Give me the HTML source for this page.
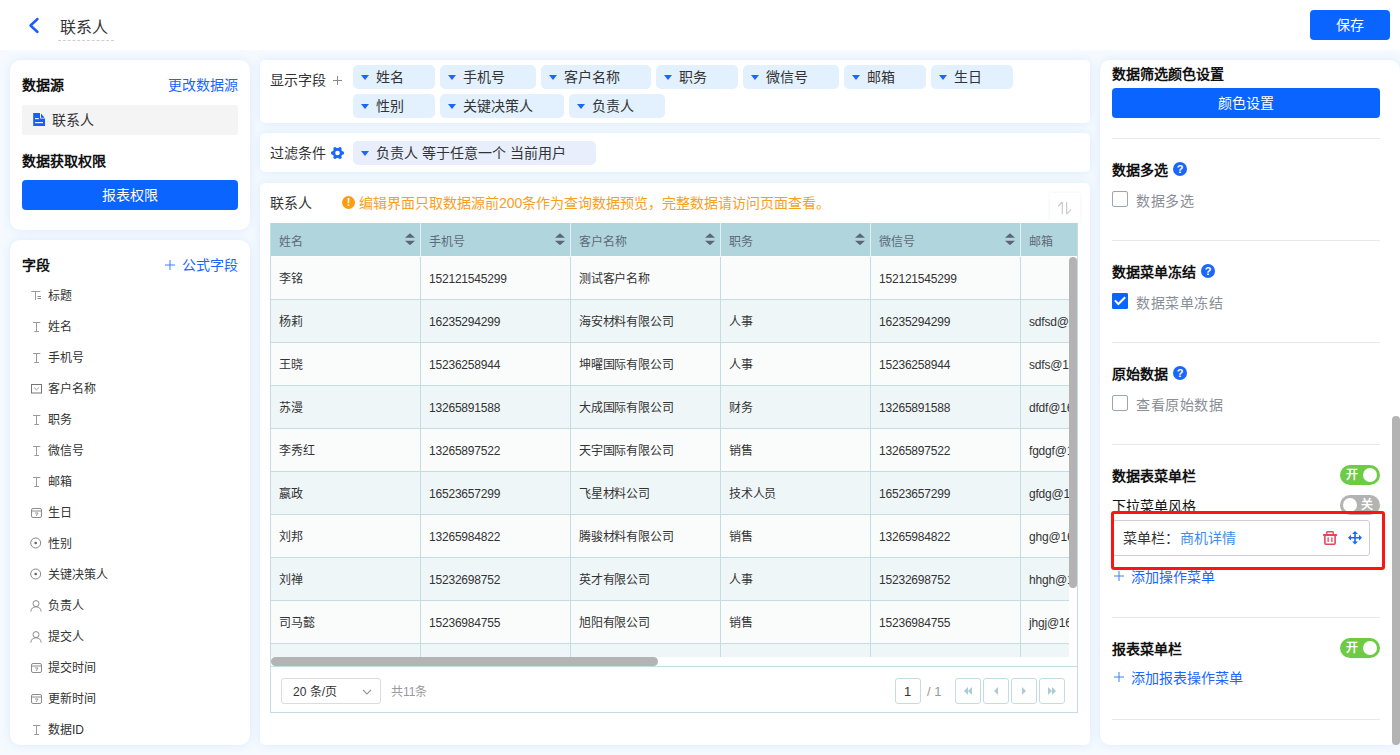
<!DOCTYPE html>
<html lang="zh-CN"><head><meta charset="utf-8">
<style>
*{box-sizing:border-box;margin:0;padding:0}
html,body{width:1400px;height:755px;overflow:hidden}
body{position:relative;background:#f6faff;font-family:"Liberation Sans",sans-serif;color:#333;font-size:14px}
.abs{position:absolute}
.t{position:absolute;white-space:nowrap;line-height:1}
.hdr{left:0;top:0;width:1400px;height:50px;background:#fff}
.panel{position:absolute;background:#fff;border-radius:10px;box-shadow:0 0 10px rgba(212,233,252,.85)}
.b{font-weight:bold;color:#111}
.blue{color:#1a66ff}
.btn{position:absolute;background:#0a64ff;border-radius:4px;color:#fff;text-align:center}
.fi{position:absolute;left:22px;height:20px;font-size:12px;color:#333}
.fi span{position:absolute;left:26px;top:3px;white-space:nowrap;line-height:14px}
.fi svg{position:absolute;left:9px;top:4px}
.tag{position:absolute;height:24px;background:#e3f0fe;border-radius:5px}
.tag i{position:absolute;left:8px;top:10px;width:0;height:0;border-left:4.5px solid transparent;border-right:4.5px solid transparent;border-top:5px solid #1a66ff}
.tag span{position:absolute;left:23px;top:5px;white-space:nowrap;line-height:14px;font-size:14px;color:#333}
.tbl{position:absolute;left:270px;top:223px;width:808px;height:490px;border:1px solid #c4dde3;border-top:none;overflow:hidden}
.row{position:absolute;left:0;width:806px;height:43px;border-bottom:1px solid #c4dde3}
.cell{position:absolute;top:0;height:42px;width:150px;border-right:1px solid #c4dde3;font-size:12px;color:#333}
.cell span{position:absolute;left:8px;top:16px;line-height:13px;white-space:nowrap;letter-spacing:-0.2px}
.sec{position:absolute;left:1112px;width:268px;height:1px;background:#e8e8e8}
.cb{position:absolute;left:1112px;width:16px;height:16px;border:1px solid #9da3b4;border-radius:2px;background:#fff}
.q{position:absolute;width:14px;height:14px;border-radius:50%;background:#1a66ff;color:#fff;font-size:11px;font-weight:bold;text-align:center;line-height:14px}
.tog{position:absolute;left:1340px;width:40px;height:20px;border-radius:10px;background:#6dcb44}
.tog b{position:absolute;top:3px;width:14px;height:14px;border-radius:50%;background:#fff}
.tog span{position:absolute;top:3px;font-size:12px;color:#fff;font-weight:bold;line-height:14px}
.pbtn{position:absolute;top:678px;width:26px;height:26px;border:1px solid #c4dde3;border-radius:3px;background:#fff}
</style></head><body>

<!-- header -->
<div class="abs hdr"></div>
<svg class="abs" style="left:28px;top:17px" width="12" height="17" viewBox="0 0 12 17"><path d="M9.5 2 L2.5 8.5 L9.5 15" fill="none" stroke="#1a5cff" stroke-width="2.4" stroke-linecap="round" stroke-linejoin="round"/></svg>
<div class="t" style="left:60px;top:20px;font-size:16px;color:#333">联系人</div>
<div class="abs" style="left:58px;top:40px;width:56px;height:1px;border-top:1px dashed #cfcfcf"></div>
<div class="btn" style="left:1310px;top:10px;width:80px;height:30px;line-height:30px;font-size:14px">保存</div>

<!-- left panel 1 -->
<div class="panel" style="left:10px;top:60px;width:240px;height:170px"></div>
<div class="t b" style="left:22px;top:78px">数据源</div>
<div class="t blue" style="left:168px;top:78px">更改数据源</div>
<div class="abs" style="left:22px;top:105px;width:216px;height:30px;background:#f4f4f5;border-radius:2px"></div>
<svg class="abs" style="left:33px;top:113px" width="13" height="14" viewBox="0 0 13 14"><path d="M0.2 0 H7 V5.6 H12 V13 H0.2 Z" fill="#1a5cff"/><path d="M8 0.6 L11.6 4.8 H8 Z" fill="#1a5cff"/><rect x="2" y="5.1" width="3.8" height="1.1" fill="#fff"/><rect x="2" y="9.1" width="8" height="1.1" fill="#fff"/></svg>
<div class="t" style="left:52px;top:113px">联系人</div>
<div class="t b" style="left:22px;top:154px">数据获取权限</div>
<div class="btn" style="left:22px;top:180px;width:216px;height:30px;line-height:30px">报表权限</div>

<!-- left panel 2 -->
<div class="panel" style="left:10px;top:240px;width:240px;height:505px"></div>
<div class="t b" style="left:22px;top:258px">字段</div>
<svg class="abs" style="left:165px;top:260px" width="10" height="10" viewBox="0 0 10 10"><path d="M0 5 H10 M5 0 V10" stroke="#3f7ff5" stroke-width="1"/></svg>
<div class="t blue" style="left:182px;top:258px">公式字段</div>
<div class="fi" style="top:286px"><svg width="11" height="11" viewBox="0 0 11 11"><path d="M0.3 1.5 H9.3 M4.5 1.5 V10" stroke="#9a9a9a" stroke-width="1"/><path d="M6.5 6.5 H10 M6.5 8.5 H10" stroke="#8a8a8a" stroke-width="1"/></svg><span>标题</span></div>
<div class="fi" style="top:317px"><svg width="11" height="11" viewBox="0 0 11 11"><path d="M2 1.5 H9.3 M5.5 1.5 V10.5 M3.3 10.5 H8" stroke="#9a9a9a" stroke-width="1"/></svg><span>姓名</span></div>
<div class="fi" style="top:348px"><svg width="11" height="11" viewBox="0 0 11 11"><path d="M2 1.5 H9.3 M5.5 1.5 V10.5 M3.3 10.5 H8" stroke="#9a9a9a" stroke-width="1"/></svg><span>手机号</span></div>
<div class="fi" style="top:379px"><svg width="11" height="10" viewBox="0 0 11 10" style="left:9px;top:4.5px"><rect x="0.5" y="0.5" width="10" height="8.5" fill="none" stroke="#777"/><path d="M3.2 3.6 L5.5 5.8 L7.8 3.6" fill="none" stroke="#888" stroke-width=".9"/></svg><span>客户名称</span></div>
<div class="fi" style="top:410px"><svg width="11" height="11" viewBox="0 0 11 11"><path d="M2 1.5 H9.3 M5.5 1.5 V10.5 M3.3 10.5 H8" stroke="#9a9a9a" stroke-width="1"/></svg><span>职务</span></div>
<div class="fi" style="top:441px"><svg width="11" height="11" viewBox="0 0 11 11"><path d="M2 1.5 H9.3 M5.5 1.5 V10.5 M3.3 10.5 H8" stroke="#9a9a9a" stroke-width="1"/></svg><span>微信号</span></div>
<div class="fi" style="top:472px"><svg width="11" height="11" viewBox="0 0 11 11"><path d="M2 1.5 H9.3 M5.5 1.5 V10.5 M3.3 10.5 H8" stroke="#9a9a9a" stroke-width="1"/></svg><span>邮箱</span></div>
<div class="fi" style="top:503px"><svg width="11" height="11" viewBox="0 0 11 11"><rect x="0.5" y="1.5" width="10" height="9" rx="1.5" fill="none" stroke="#8c8c8c"/><path d="M0.5 4 H10.5" stroke="#8c8c8c"/><path d="M4 6 H7 L5 9" fill="none" stroke="#8c8c8c" stroke-width=".9"/></svg><span>生日</span></div>
<div class="fi" style="top:534px"><svg width="12" height="12" viewBox="0 0 12 12" style="left:8px;top:3px"><circle cx="5.7" cy="6" r="5" fill="none" stroke="#888"/><circle cx="5.7" cy="6" r="1.3" fill="#666"/></svg><span>性别</span></div>
<div class="fi" style="top:565px"><svg width="12" height="12" viewBox="0 0 12 12" style="left:8px;top:3px"><circle cx="5.7" cy="6" r="5" fill="none" stroke="#888"/><circle cx="5.7" cy="6" r="1.3" fill="#666"/></svg><span>关键决策人</span></div>
<div class="fi" style="top:596px"><svg width="12" height="12" viewBox="0 0 12 12" style="left:8px"><circle cx="6" cy="3.6" r="3" fill="none" stroke="#8c8c8c"/><path d="M0.8 11.5 Q1.5 6.8 6 6.8 Q10.5 6.8 11.2 11.5" fill="none" stroke="#8c8c8c"/></svg><span>负责人</span></div>
<div class="fi" style="top:627px"><svg width="12" height="12" viewBox="0 0 12 12" style="left:8px"><circle cx="6" cy="3.6" r="3" fill="none" stroke="#8c8c8c"/><path d="M0.8 11.5 Q1.5 6.8 6 6.8 Q10.5 6.8 11.2 11.5" fill="none" stroke="#8c8c8c"/></svg><span>提交人</span></div>
<div class="fi" style="top:658px"><svg width="11" height="11" viewBox="0 0 11 11"><rect x="0.5" y="1.5" width="10" height="9" rx="1.5" fill="none" stroke="#8c8c8c"/><path d="M0.5 4 H10.5" stroke="#8c8c8c"/><path d="M4 6 H7 L5 9" fill="none" stroke="#8c8c8c" stroke-width=".9"/></svg><span>提交时间</span></div>
<div class="fi" style="top:689px"><svg width="11" height="11" viewBox="0 0 11 11"><rect x="0.5" y="1.5" width="10" height="9" rx="1.5" fill="none" stroke="#8c8c8c"/><path d="M0.5 4 H10.5" stroke="#8c8c8c"/><path d="M4 6 H7 L5 9" fill="none" stroke="#8c8c8c" stroke-width=".9"/></svg><span>更新时间</span></div>
<div class="fi" style="top:720px"><svg width="11" height="11" viewBox="0 0 11 11"><path d="M2 1.5 H9.3 M5.5 1.5 V10.5 M3.3 10.5 H8" stroke="#9a9a9a" stroke-width="1"/></svg><span>数据ID</span></div>

<!-- middle panels -->
<div class="panel" style="left:260px;top:60px;width:830px;height:63px;border-radius:5px"></div>
<div class="t" style="left:270px;top:73px">显示字段</div>
<svg class="abs" style="left:333px;top:76px" width="9" height="9" viewBox="0 0 9 9"><path d="M0 4.5 H9 M4.5 0 V9" stroke="#888" stroke-width="1"/></svg>
<div class="tag" style="left:353px;top:65px;width:82px"><i></i><span>姓名</span></div>
<div class="tag" style="left:440px;top:65px;width:96px"><i></i><span>手机号</span></div>
<div class="tag" style="left:541px;top:65px;width:110px"><i></i><span>客户名称</span></div>
<div class="tag" style="left:656px;top:65px;width:82px"><i></i><span>职务</span></div>
<div class="tag" style="left:743px;top:65px;width:96px"><i></i><span>微信号</span></div>
<div class="tag" style="left:844px;top:65px;width:82px"><i></i><span>邮箱</span></div>
<div class="tag" style="left:931px;top:65px;width:82px"><i></i><span>生日</span></div>
<div class="tag" style="left:353px;top:94px;width:82px"><i></i><span>性别</span></div>
<div class="tag" style="left:440px;top:94px;width:124px"><i></i><span>关键决策人</span></div>
<div class="tag" style="left:569px;top:94px;width:96px"><i></i><span>负责人</span></div>

<div class="panel" style="left:260px;top:133px;width:830px;height:39px;border-radius:5px"></div>
<div class="t" style="left:270px;top:146px">过滤条件</div>
<svg class="abs" style="left:331px;top:147px" width="13" height="12" viewBox="0 0 13 12"><g fill="#1a66ff"><circle cx="6.5" cy="6" r="4.9"/><circle cx="11.35" cy="6.00" r="1.7"/><circle cx="8.93" cy="10.20" r="1.7"/><circle cx="4.08" cy="10.20" r="1.7"/><circle cx="1.65" cy="6.00" r="1.7"/><circle cx="4.07" cy="1.80" r="1.7"/><circle cx="8.93" cy="1.80" r="1.7"/></g><circle cx="6.5" cy="6" r="2.3" fill="#fff"/></svg>
<div class="tag" style="left:353px;top:141px;width:243px;background:#e8eefb"><i></i><span>负责人 等于任意一个 当前用户</span></div>

<div class="panel" style="left:260px;top:183px;width:830px;height:562px;border-radius:5px"></div>
<div class="t" style="left:270px;top:196px">联系人</div>
<div class="abs" style="left:342px;top:196px;width:13px;height:13px;border-radius:50%;background:#fd9d0c;color:#fff;font-size:11px;font-weight:bold;text-align:center;line-height:13px">!</div>
<div class="t" style="left:359px;top:196px;color:#f5a01e">编辑界面只取数据源前200条作为查询数据预览，完整数据请访问页面查看。</div>
<div class="abs" style="left:1050px;top:193px;width:30px;height:30px;background:#fff;box-shadow:0 0 3px rgba(0,0,0,.07)"></div>
<svg class="abs" style="left:1056px;top:200px" width="18" height="17" viewBox="0 0 18 17"><path d="M6.3 2 V14.2 M6.3 2 L2.2 6.3 M10.7 2 V14.2 M10.7 14.2 L15 9.5" fill="none" stroke="#c6c6c6" stroke-width="1.1"/></svg>

<div class="tbl"><div class="abs" style="left:0;top:0;width:806px;height:33px;background:#b1d5dd"></div>
<div class="abs" style="left:0px;top:0;width:150px;height:33px;border-right:1px solid #e6f1f3;"><span class="t" style="left:8px;top:13px;font-size:12px;color:#5e6a78">姓名</span><svg width="10" height="12" viewBox="0 0 10 12" style="position:absolute;left:134px;top:10px"><path d="M5 0.3 L10 4.8 H0 Z M5 12.2 L10 7.7 H0 Z" fill="#5b6579"/></svg></div>
<div class="abs" style="left:150px;top:0;width:150px;height:33px;border-right:1px solid #e6f1f3;"><span class="t" style="left:8px;top:13px;font-size:12px;color:#5e6a78">手机号</span><svg width="10" height="12" viewBox="0 0 10 12" style="position:absolute;left:134px;top:10px"><path d="M5 0.3 L10 4.8 H0 Z M5 12.2 L10 7.7 H0 Z" fill="#5b6579"/></svg></div>
<div class="abs" style="left:300px;top:0;width:150px;height:33px;border-right:1px solid #e6f1f3;"><span class="t" style="left:8px;top:13px;font-size:12px;color:#5e6a78">客户名称</span><svg width="10" height="12" viewBox="0 0 10 12" style="position:absolute;left:134px;top:10px"><path d="M5 0.3 L10 4.8 H0 Z M5 12.2 L10 7.7 H0 Z" fill="#5b6579"/></svg></div>
<div class="abs" style="left:450px;top:0;width:150px;height:33px;border-right:1px solid #e6f1f3;"><span class="t" style="left:8px;top:13px;font-size:12px;color:#5e6a78">职务</span><svg width="10" height="12" viewBox="0 0 10 12" style="position:absolute;left:134px;top:10px"><path d="M5 0.3 L10 4.8 H0 Z M5 12.2 L10 7.7 H0 Z" fill="#5b6579"/></svg></div>
<div class="abs" style="left:600px;top:0;width:150px;height:33px;border-right:1px solid #e6f1f3;"><span class="t" style="left:8px;top:13px;font-size:12px;color:#5e6a78">微信号</span><svg width="10" height="12" viewBox="0 0 10 12" style="position:absolute;left:134px;top:10px"><path d="M5 0.3 L10 4.8 H0 Z M5 12.2 L10 7.7 H0 Z" fill="#5b6579"/></svg></div>
<div class="abs" style="left:750px;top:0;width:150px;height:33px;"><span class="t" style="left:8px;top:13px;font-size:12px;color:#5e6a78">邮箱</span></div>
<div class="abs" style="left:0;top:0;width:798px;height:434px;overflow:hidden"><div class="row" style="top:34px;background:#fafcfc"><div class="cell" style="left:0px"><span>李铭</span></div><div class="cell" style="left:150px"><span>152121545299</span></div><div class="cell" style="left:300px"><span>测试客户名称</span></div><div class="cell" style="left:450px"><span></span></div><div class="cell" style="left:600px"><span>152121545299</span></div><div class="cell" style="left:750px"><span></span></div></div><div class="row" style="top:77px;background:#eff6f8"><div class="cell" style="left:0px"><span>杨莉</span></div><div class="cell" style="left:150px"><span>16235294299</span></div><div class="cell" style="left:300px"><span>海安材料有限公司</span></div><div class="cell" style="left:450px"><span>人事</span></div><div class="cell" style="left:600px"><span>16235294299</span></div><div class="cell" style="left:750px"><span>sdfsd@163.com</span></div></div><div class="row" style="top:120px;background:#fafcfc"><div class="cell" style="left:0px"><span>王晓</span></div><div class="cell" style="left:150px"><span>15236258944</span></div><div class="cell" style="left:300px"><span>坤曜国际有限公司</span></div><div class="cell" style="left:450px"><span>人事</span></div><div class="cell" style="left:600px"><span>15236258944</span></div><div class="cell" style="left:750px"><span>sdfs@163.com</span></div></div><div class="row" style="top:163px;background:#eff6f8"><div class="cell" style="left:0px"><span>苏漫</span></div><div class="cell" style="left:150px"><span>13265891588</span></div><div class="cell" style="left:300px"><span>大成国际有限公司</span></div><div class="cell" style="left:450px"><span>财务</span></div><div class="cell" style="left:600px"><span>13265891588</span></div><div class="cell" style="left:750px"><span>dfdf@163.com</span></div></div><div class="row" style="top:206px;background:#fafcfc"><div class="cell" style="left:0px"><span>李秀红</span></div><div class="cell" style="left:150px"><span>13265897522</span></div><div class="cell" style="left:300px"><span>天宇国际有限公司</span></div><div class="cell" style="left:450px"><span>销售</span></div><div class="cell" style="left:600px"><span>13265897522</span></div><div class="cell" style="left:750px"><span>fgdgf@163.com</span></div></div><div class="row" style="top:249px;background:#eff6f8"><div class="cell" style="left:0px"><span>嬴政</span></div><div class="cell" style="left:150px"><span>16523657299</span></div><div class="cell" style="left:300px"><span>飞星材料公司</span></div><div class="cell" style="left:450px"><span>技术人员</span></div><div class="cell" style="left:600px"><span>16523657299</span></div><div class="cell" style="left:750px"><span>gfdg@163.com</span></div></div><div class="row" style="top:292px;background:#fafcfc"><div class="cell" style="left:0px"><span>刘邦</span></div><div class="cell" style="left:150px"><span>13265984822</span></div><div class="cell" style="left:300px"><span>腾骏材料有限公司</span></div><div class="cell" style="left:450px"><span>销售</span></div><div class="cell" style="left:600px"><span>13265984822</span></div><div class="cell" style="left:750px"><span>ghg@163.com</span></div></div><div class="row" style="top:335px;background:#eff6f8"><div class="cell" style="left:0px"><span>刘禅</span></div><div class="cell" style="left:150px"><span>15232698752</span></div><div class="cell" style="left:300px"><span>英才有限公司</span></div><div class="cell" style="left:450px"><span>人事</span></div><div class="cell" style="left:600px"><span>15232698752</span></div><div class="cell" style="left:750px"><span>hhgh@163.com</span></div></div><div class="row" style="top:378px;background:#fafcfc"><div class="cell" style="left:0px"><span>司马懿</span></div><div class="cell" style="left:150px"><span>15236984755</span></div><div class="cell" style="left:300px"><span>旭阳有限公司</span></div><div class="cell" style="left:450px"><span>销售</span></div><div class="cell" style="left:600px"><span>15236984755</span></div><div class="cell" style="left:750px"><span>jhgj@163.com</span></div></div><div class="row" style="top:421px;background:#eff6f8"><div class="cell" style="left:0px"><span></span></div><div class="cell" style="left:150px"><span></span></div><div class="cell" style="left:300px"><span></span></div><div class="cell" style="left:450px"><span></span></div><div class="cell" style="left:600px"><span></span></div><div class="cell" style="left:750px"><span></span></div></div></div>
<div class="abs" style="left:798px;top:33px;width:8px;height:400px;background:#fff"></div>
<div class="abs" style="left:798px;top:34px;width:8px;height:331px;border-radius:4px;background:#b3b3b3"></div>
<div class="abs" style="left:0;top:434px;width:806px;height:9px;background:#fff"></div>
<div class="abs" style="left:0;top:434px;width:387px;height:9px;border-radius:4.5px;background:#b4b4b4"></div>
<div class="abs" style="left:0;top:443px;width:806px;height:1px;background:#c4dde3"></div>
<div class="abs" style="left:10px;top:455px;width:100px;height:26px;border:1px solid #dcdcdc;border-radius:3px;background:#fff"><span class="t" style="left:11px;top:7px;font-size:12px;color:#333">20 条/页</span><svg width="10" height="7" viewBox="0 0 10 7" style="position:absolute;left:80px;top:10px"><path d="M1 1 L5 5 L9 1" fill="none" stroke="#999" stroke-width="1.1"/></svg></div>
<span class="t" style="left:120px;top:463px;font-size:12px;color:#999">共11条</span>
<div class="abs" style="left:624px;top:455px;width:26px;height:26px;border:1px solid #c4dde3;border-radius:3px;background:#fff"><span class="t" style="left:8px;top:6px;font-size:13px;color:#333">1</span></div>
<span class="t" style="left:656px;top:462px;font-size:13px;color:#999">/ 1</span>
<div class="abs" style="left:684px;top:455px;width:26px;height:26px;border:1px solid #c4dde3;border-radius:3px;background:#fff"><svg width="14" height="14" viewBox="0 0 14 14" style="position:absolute;left:5px;top:5px"><path d="M7 3 V11 L3 7 Z M11 3 V11 L7 7 Z" fill="#acccd5"/></svg></div>
<div class="abs" style="left:712px;top:455px;width:26px;height:26px;border:1px solid #c4dde3;border-radius:3px;background:#fff"><svg width="14" height="14" viewBox="0 0 14 14" style="position:absolute;left:5px;top:5px"><path d="M9 3 V11 L5 7 Z" fill="#acccd5"/></svg></div>
<div class="abs" style="left:740px;top:455px;width:26px;height:26px;border:1px solid #c4dde3;border-radius:3px;background:#fff"><svg width="14" height="14" viewBox="0 0 14 14" style="position:absolute;left:5px;top:5px"><path d="M5 3 V11 L9 7 Z" fill="#acccd5"/></svg></div>
<div class="abs" style="left:768px;top:455px;width:26px;height:26px;border:1px solid #c4dde3;border-radius:3px;background:#fff"><svg width="14" height="14" viewBox="0 0 14 14" style="position:absolute;left:5px;top:5px"><path d="M3 3 V11 L7 7 Z M7 3 V11 L11 7 Z" fill="#acccd5"/></svg></div></div>

<!-- right panel -->
<div class="panel" style="left:1100px;top:60px;width:300px;height:685px;border-radius:10px"></div>
<div class="t b" style="left:1112px;top:67px">数据筛选颜色设置</div>
<div class="btn" style="left:1112px;top:88px;width:268px;height:30px;line-height:30px">颜色设置</div>
<div class="sec" style="top:138px"></div>

<div class="t b" style="left:1112px;top:163px">数据多选</div>
<div class="q" style="left:1173px;top:162px">?</div>
<div class="cb" style="top:191px"></div>
<div class="t" style="left:1136px;top:194px;color:#8a8e96;letter-spacing:0.6px">数据多选</div>
<div class="sec" style="top:240px"></div>

<div class="t b" style="left:1112px;top:265px">数据菜单冻结</div>
<div class="q" style="left:1201px;top:264px">?</div>
<div class="cb" style="top:293px;background:#0a64ff;border-color:#0a64ff;border-radius:1px"><svg width="14" height="14" viewBox="0 0 14 14" style="position:absolute;left:0;top:0"><path d="M1.9 6.4 L5.4 10 L12.2 3.2" fill="none" stroke="#fff" stroke-width="2"/></svg></div>
<div class="t" style="left:1136px;top:296px;color:#8a8e96;letter-spacing:0.6px">数据菜单冻结</div>
<div class="sec" style="top:342px"></div>

<div class="t b" style="left:1112px;top:367px">原始数据</div>
<div class="q" style="left:1173px;top:366px">?</div>
<div class="cb" style="top:395px"></div>
<div class="t" style="left:1136px;top:398px;color:#8a8e96;letter-spacing:0.6px">查看原始数据</div>
<div class="sec" style="top:444px"></div>

<div class="t b" style="left:1112px;top:469px">数据表菜单栏</div>
<div class="tog" style="top:465px"><span style="left:6px">开</span><b style="left:23px"></b></div>
<div class="t" style="left:1112px;top:499px;color:#111">下拉菜单风格</div>
<div class="tog" style="top:495px;background:#b3b3b3"><b style="left:3px"></b><span style="left:21px">关</span></div>
<div class="abs" style="left:1112px;top:520px;width:258px;height:36px;background:#fff;border:1px solid #cfcfcf;border-radius:3px"></div>
<div class="t" style="left:1123px;top:531px;color:#333">菜单栏：</div>
<div class="t" style="left:1180px;top:531px;color:#3d8ee8">商机详情</div>
<svg class="abs" style="left:1323px;top:531px" width="14" height="14" viewBox="0 0 14 14"><path d="M3.8 3.2 V1.4 Q3.8 0.7 4.5 0.7 H9.5 Q10.2 0.7 10.2 1.4 V3.2" fill="none" stroke="#e5475a" stroke-width="1.4"/><rect x="0" y="3" width="14" height="2" rx=".5" fill="#e5475a"/><path d="M1.9 5 V12.3 Q1.9 13.2 2.8 13.2 H11.2 Q12.1 13.2 12.1 12.3 V5" fill="none" stroke="#e5475a" stroke-width="1.6"/><rect x="4.5" y="6.2" width="1.3" height="4.8" rx=".6" fill="#e5475a"/><rect x="8.2" y="6.2" width="1.3" height="4.8" rx=".6" fill="#e5475a"/></svg>
<svg class="abs" style="left:1348px;top:531px" width="14" height="14" viewBox="0 0 14 14"><path d="M2 6.7 H12 M7 2 V11.5" stroke="#1a66ff" stroke-width="1.6"/><path d="M7 0 L9.9 3 H4.1 Z M7 13.5 L9.9 10.5 H4.1 Z M0 6.7 L3 3.8 V9.6 Z M14 6.7 L11 3.8 V9.6 Z" fill="#1a66ff"/></svg>
<div class="abs" style="left:1111px;top:511px;width:274px;height:59px;border:3px solid #ff1414;border-radius:3px"></div>
<svg class="abs" style="left:1114px;top:571px" width="10" height="10" viewBox="0 0 10 10"><path d="M0 5 H10 M5 0 V10" stroke="#3f7ff5" stroke-width="1"/></svg>
<div class="t blue" style="left:1131px;top:570px">添加操作菜单</div>
<div class="sec" style="top:617px"></div>

<div class="t b" style="left:1112px;top:642px">报表菜单栏</div>
<div class="tog" style="top:638px"><span style="left:6px">开</span><b style="left:23px"></b></div>
<svg class="abs" style="left:1114px;top:672px" width="10" height="10" viewBox="0 0 10 10"><path d="M0 5 H10 M5 0 V10" stroke="#3f7ff5" stroke-width="1"/></svg>
<div class="t blue" style="left:1131px;top:671px">添加报表操作菜单</div>
<div class="sec" style="top:719px"></div>
<div class="abs" style="left:1392px;top:416px;width:8px;height:329px;border-radius:4px;background:#b3b3b3"></div>

</body></html>
